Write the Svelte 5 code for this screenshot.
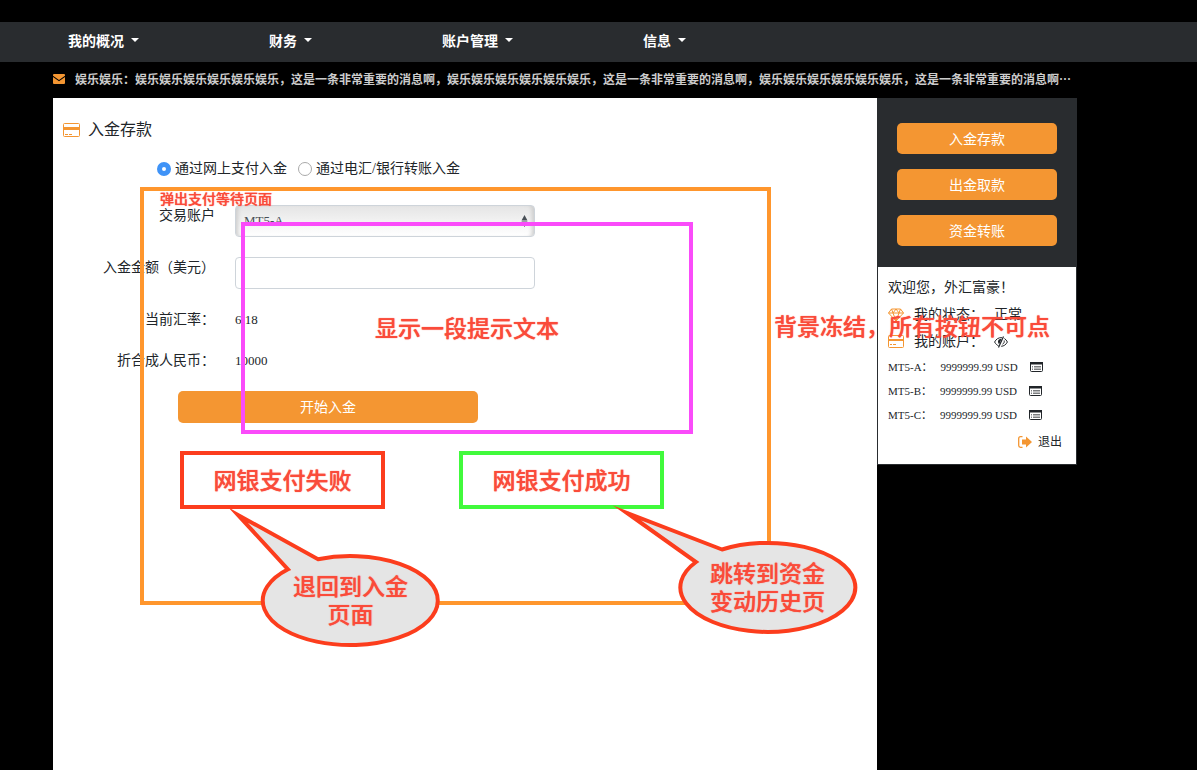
<script>
  const menus = ['我的概况', '财务', '账户管理', '信息'];
  const actions = ['入金存款', '出金取款', '资金转账'];
  const accounts = ['MT5-A', 'MT5-B', 'MT5-C'];
  const joy = '娱乐'.repeat(6);
  const notice = '这是一条非常重要的消息啊';
  const ticker = '娱乐娱乐：' + [1, 2, 3].map(() => joy + '，' + notice).join('，') + '…';
  let method = $state('online');
</script>

{#snippet card()}
  <svg class="card-icon" viewBox="0 0 17 14" aria-hidden="true">
    <rect x="0.5" y="0.5" width="16" height="13" rx="1" fill="#fff" stroke="#f49632" />
    <path d="M0 4h17v3H0z" fill="#f49632" />
    <path d="M2 11.5h3M6 11.5h3" stroke="#f49632" />
  </svg>
{/snippet}

<div class="page" lang="zh-CN">
  <nav>
    {#each menus as menu}
      <button class="menu" type="button">{menu}<span class="caret"></span></button>
    {/each}
  </nav>

  <div class="ticker">
    <svg width="12" height="10" viewBox="0 0 12 10" aria-hidden="true">
      <path d="M1 0h10a1 1 0 0 1 1 1v.7L6 6 0 1.700V1a1 1 0 0 1 1-1zM0 3l6 4.300L12 3v6a1 1 0 0 1-1 1H1a1 1 0 0 1-1-1z" fill="#f49632" />
    </svg>
    <span>{ticker}</span>
  </div>

  <div class="columns">
    <main>
      <h1>{@render card()}入金存款</h1>
      <div class="methods">
        <label><input type="radio" name="method" value="online" bind:group={method} />通过网上支付入金</label>
        <label><input type="radio" name="method" value="wire" bind:group={method} />通过电汇/银行转账入金</label>
      </div>
      <form>
        <div class="row">
          <label for="account">交易账户</label>
          <div class="select">
            <select id="account">
              {#each accounts as account}<option>{account}</option>{/each}
            </select>
            <svg width="7" height="12" viewBox="0 0 7 12" aria-hidden="true">
              <path d="M3.500 0L6.500 5.500h-6zM3.500 12L.5 6.500h6z" fill="#495057" />
            </svg>
          </div>
        </div>
        <div class="row">
          <label for="amount">入金金额（美元）</label>
          <input id="amount" type="text" />
        </div>
        <div class="row"><span class="name">当前汇率：</span><span class="value">6.18</span></div>
        <div class="row"><span class="name">折合成人民币：</span><span class="value">10000</span></div>
        <button class="primary" type="button">开始入金</button>
      </form>
    </main>

    <aside>
      <div class="actions">
        {#each actions as action}<button class="primary" type="button">{action}</button>{/each}
      </div>
      <div class="profile">
        <p>欢迎您，外汇富豪！</p>
        <p class="status">
          <svg width="16" height="14" viewBox="0 0 16 14" fill="none" stroke="#f49632" aria-hidden="true">
            <path d="M3.500 1h9L15.500 5 8 13 .5 5zM.5 5h15M5 5l3 8 3-8M3.500 1L5 5l3-4 3 4 1.500-4" />
          </svg>
          <span>我的状态：</span><span>正常</span>
        </p>
        <p class="status">
          <svg width="16" height="14" viewBox="0 0 16 14" aria-hidden="true">
            <rect x="0.5" y="0.5" width="15" height="12" rx="1" fill="#fff" stroke="#f49632" />
            <path d="M0 4h16v2H0z" fill="#f49632" />
            <path d="M2 9.500h2M5 9.500h3" stroke="#f49632" />
          </svg>
          <span>我的账户：</span>
          <svg class="eye" width="14" height="12" viewBox="0 0 14 12" fill="none" stroke="#212529" aria-hidden="true">
            <path d="M9.500 .5L4.500 11.500" stroke-width="1.200" />
            <path d="M8 1.700C4.500 1.200 2 3.300.6 6c1 1.900 2.400 3.200 4 3.900M10.400 2.500c1.300.8 2.300 2 3 3.500-1.400 2.700-3.600 4.200-6.200 4.300" />
            <path d="M7.500 3C5 2.500 3.800 4 4 6c.1 1 .5 1.800 1.200 2.300z" fill="#212529" stroke="none" />
            <path d="M10.200 4.500c.3 1.700-.3 3-1.700 3.700" />
          </svg>
        </p>
        {#each accounts as account}
          <div class="balance">
            <span>{account}：</span><span>9999999.99 USD</span>
            <svg width="13" height="10" viewBox="0 0 13 10" aria-hidden="true">
              <rect x="0.500" y="0.500" width="12" height="9" rx="1" fill="#fff" stroke="#212529" />
              <path d="M0 0h13v2.500H0z" fill="#212529" />
              <path d="M2 4.500h1M4 4.500h7M2 6h1M4 6h7M2 7.500h1M4 7.500h7" stroke="#212529" stroke-width=".6" />
            </svg>
          </div>
        {/each}
        <a href="#logout">
          <svg width="14" height="12" viewBox="0 0 14 12" aria-hidden="true">
            <path d="M4.500 .7H2.500Q.7.700.7 2.500v7q0 1.800 1.800 1.800h2" fill="none" stroke="#f49632" stroke-width="1.300" />
            <path d="M4 3.500h4V.5l6 5.500-6 5.500v-3H4z" fill="#f49632" />
          </svg>
          退出
        </a>
      </div>
    </aside>
  </div>

  <div class="notes">
    <div class="frame waiting"></div>
    <div class="small-note">弹出支付等待页面</div>
    <div class="frame hint">显示一段提示文本</div>
    <div class="frozen">背景冻结，所有按钮不可点</div>
    <div class="frame failed">网银支付失败</div>
    <div class="frame success">网银支付成功</div>
    <div class="bubble back">
      <svg width="212" height="140" viewBox="228 507 212 140" aria-hidden="true">
        <path d="M318 559.200A87.500 44.500 0 1 1 288 569.300L238 515Z" />
      </svg>
      <span>退回到入金<br />页面</span>
    </div>
    <div class="bubble history">
      <svg width="245" height="129" viewBox="612 505 245 129" aria-hidden="true">
        <path d="M722 549.500A87.500 44.500 0 1 1 696 562L627 513Z" />
      </svg>
      <span>跳转到资金<br />变动历史页</span>
    </div>
  </div>
</div>

<style>
  :global(body) {
    margin: 0;
    background: #000;
  }
  .page {
    position: relative;
    display: flex;
    flex-direction: column;
    box-sizing: border-box;
    min-height: 100vh;
    padding-top: 22px;
    overflow: hidden;
    background: #000;
    color: #212529;
    font: 14px/20px 'Liberation Serif', 'Noto Sans CJK SC', serif;
  }
  button, input, select {
    box-sizing: border-box;
    margin: 0;
    font: inherit;
  }
  p, h1 {
    margin: 0;
    font-weight: 400;
  }
  nav {
    display: flex;
    gap: 130px;
    padding-left: 68px;
    background: #292c2f;
  }
  .menu {
    display: flex;
    align-items: center;
    gap: 7px;
    height: 40px;
    padding: 0;
    border: 0;
    background: none;
    color: #fff;
    font-weight: 700;
    white-space: nowrap;
  }
  .caret {
    border: 4px solid transparent;
    border-top-color: #fff;
    border-bottom: 0;
    margin-bottom: 4px;
  }
  .ticker {
    display: flex;
    align-items: center;
    gap: 10px;
    padding: 0 0 2px 53px;
    color: #ccc;
    font: 700 12px/34px 'Noto Sans CJK SC', sans-serif;
    white-space: nowrap;
  }
  .columns {
    display: flex;
    flex: 1;
    align-items: stretch;
    max-width: 1024px;
    margin-left: 53px;
  }
  main {
    flex: 1;
    box-sizing: border-box;
    padding: 20px 10px;
    background: #fff;
  }
  h1 {
    display: flex;
    align-items: center;
    gap: 8px;
    margin-bottom: 16px;
    font-size: 16px;
    line-height: 24px;
  }
  .card-icon {
    width: 17px;
    height: 14px;
  }
  .methods {
    display: flex;
    gap: 11px;
    height: 21px;
    margin: 0 0 26px 94px;
  }
  .methods label {
    display: flex;
    align-items: center;
    gap: 4px;
  }
  .methods input {
    appearance: none;
    width: 14px;
    height: 14px;
    border: 1px solid #aaa;
    border-radius: 50%;
    background: #fff;
  }
  .methods input:checked {
    border: 5px solid #3f93f7;
  }
  form {
    display: grid;
    gap: 20px;
  }
  .row {
    display: grid;
    grid-template-columns: 152px 300px;
    gap: 20px;
    line-height: 21px;
  }
  .row label, .name {
    text-align: right;
  }
  .value {
    font-size: 13px;
  }
  .select {
    position: relative;
  }
  .select svg {
    position: absolute;
    right: 7px;
    top: 10px;
  }
  select, .row input {
    display: block;
    width: 100%;
    height: 32px;
    padding: 0 8px 2px;
    border: 1px solid #ced4da;
    border-radius: 4px;
    background: #fff;
    color: #495057;
    font-size: 13px;
  }
  select {
    appearance: none;
    background: linear-gradient(#e5e5e5, #fff);
    box-shadow: inset 5px 0 4px -3px #ccc, inset -5px 0 4px -3px #ccc;
  }
  .primary {
    height: 31px;
    padding: 2px 0 0;
    border: 0;
    border-radius: 5px;
    background: #f49632;
    color: #fff;
  }
  form .primary {
    width: 300px;
    height: 32px;
    margin-left: 115px;
  }
  aside {
    width: 200px;
    flex: none;
  }
  .actions {
    display: grid;
    gap: 15px;
    padding: 25px 20px 21px;
    background: #292c2f;
  }
  .profile {
    padding: 7px 10px 10px;
    border: 1px solid #292c2f;
    border-top: 0;
    background: #fff;
    white-space: nowrap;
  }
  .profile p {
    line-height: 27px;
  }
  .profile .status {
    display: flex;
    align-items: center;
    gap: 10px;
  }
  .status svg {
    width: 16px;
    flex: none;
  }
  .status .eye {
    width: 14px;
  }
  .balance {
    display: flex;
    align-items: center;
    gap: 8px;
    font-size: 11px;
    line-height: 24px;
  }
  .balance svg {
    margin-left: 4px;
  }
  .profile a {
    display: flex;
    align-items: center;
    justify-content: flex-end;
    gap: 6px;
    margin: 3px 4px 0 0;
    color: inherit;
    font-size: 12px;
    line-height: 24px;
    text-decoration: none;
  }
  .notes {
    position: absolute;
    inset: 0;
    color: #fa4b3a;
    font: 500 23px/28px 'Noto Sans CJK SC', sans-serif;
    text-shadow: 0 0 1px #fa4b3a;
    white-space: nowrap;
  }
  .notes > div {
    position: absolute;
  }
  .frame {
    display: flex;
    align-items: center;
    justify-content: center;
    box-sizing: border-box;
    padding-bottom: 2px;
    border: 4px solid;
  }
  .waiting {
    left: 140px;
    top: 187px;
    width: 631px;
    height: 418px;
    border-color: #ff962d;
  }
  .small-note {
    left: 160px;
    top: 188px;
    font-size: 14px;
    line-height: 20px;
  }
  .hint {
    left: 241px;
    top: 222px;
    width: 452px;
    height: 212px;
    border-color: #fa4bfa;
  }
  .frozen {
    left: 774px;
    top: 311px;
  }
  .failed, .success {
    top: 451px;
    width: 205px;
    height: 58px;
  }
  .failed {
    left: 180px;
    border-color: #fc3d1d;
  }
  .success {
    left: 459px;
    border-color: #41fa3c;
  }
  .bubble {
    display: flex;
    justify-content: flex-end;
    text-align: center;
  }
  .bubble svg {
    position: absolute;
    inset: 0;
    overflow: visible;
  }
  .bubble path {
    fill: #e5e5e5;
    stroke: #fc3d1d;
    stroke-width: 4;
    stroke-miterlimit: 12;
  }
  .bubble span {
    position: relative;
    align-self: flex-end;
    width: 179px;
    padding-bottom: 20px;
  }
  .back {
    left: 228px;
    top: 507px;
    width: 212px;
    height: 140px;
  }
  .history {
    left: 612px;
    top: 505px;
    width: 245px;
    height: 129px;
  }
</style>
